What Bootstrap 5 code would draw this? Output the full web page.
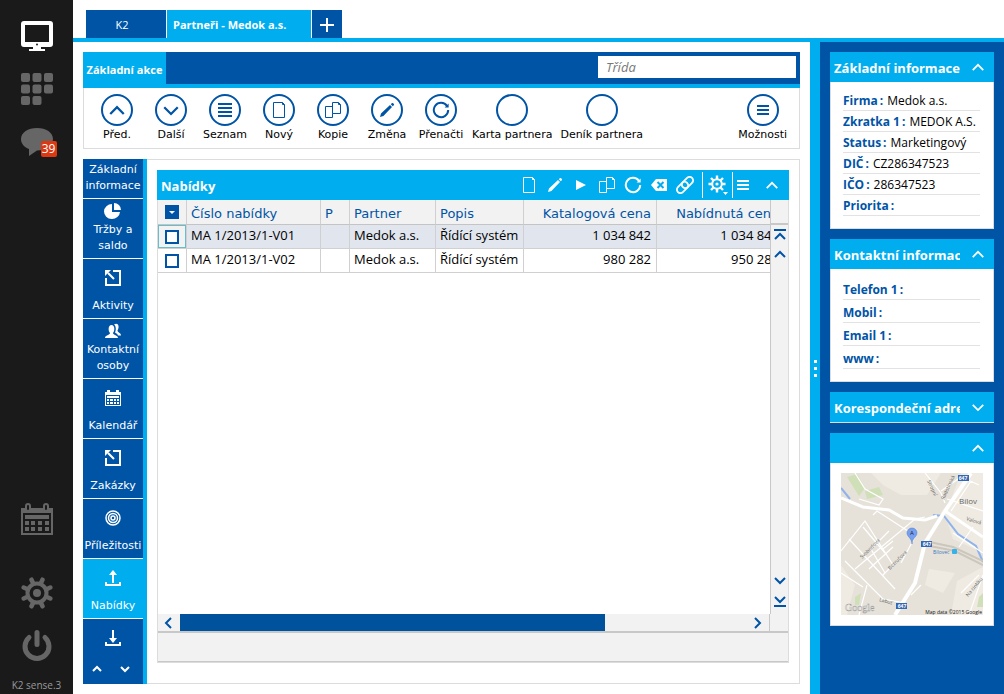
<!DOCTYPE html>
<html lang="cs">
<head>
<meta charset="utf-8">
<meta name="viewport" content="width=device-width, initial-scale=1">
<title>K2 – Partneři</title>
<link href="https://cdn.jsdelivr.net/npm/bootstrap@5.3.0/dist/css/bootstrap.min.css" rel="stylesheet">
<style>
:root { --navy:#0054a6; --sky:#00adef; --line:#dcdcdc; --pale:#f2f2f2; --wide:"DejaVu Sans",Verdana,sans-serif; --text:"Open Sans","Segoe UI",sans-serif; }
body { font:13px/18px var(--text); color:#000; background:#fff; }
button { border:0; padding:0; background:none; color:inherit; font:inherit; }
svg { display:block; flex:none; }
.ico { fill:none; stroke:currentColor; stroke-width:2; }
.bg-navy { background:var(--navy); }
.bg-sky { background:var(--sky); }
.min-0 { min-width:0; min-height:0; }

.app-side { width:73px; background:#1a1a1a; color:#666; padding:20px 0 2px; }
.app-side button { width:32px; height:32px; margin-bottom:21px; }
.app-side .apart { margin-bottom:42px; }
.app-side .on { color:#fff; }
.app-side .count { position:absolute; left:20px; top:15px; width:16px; height:16px; border-radius:2px; background:#dc3912; color:#fff; font-size:12px; line-height:16px; }
.app-ver { font-size:10px; line-height:14px; color:#999; }

.doc-tabs { padding:10px 13px 0; border-bottom:4px solid var(--sky); gap:1px; }
.doc-tabs button { height:28px; padding-top:2px; color:#fff; background:var(--navy); font-size:11px; }
.doc-tabs .t-home { width:80px; padding-right:8px; }
.doc-tabs .t-open { width:144px; padding-left:6px; background:var(--sky); font-weight:700; text-align:left; }
.doc-tabs .t-add { width:30px; }

.workspace { padding:10px; gap:10px; }
.ribbon-head { height:36px; border-bottom:4px solid var(--sky); padding-right:4px; }
.ribbon-head button { height:36px; width:83px; background:var(--sky); color:#fff; font-size:11px; font-weight:700; }
.ribbon-head input { width:198px; height:22px; border:0; border-radius:0; padding:0 8px; font:italic 13px/20px var(--text); }
.ribbon-head input::placeholder { color:#777; }
.ribbon-body { border:1px solid var(--line); border-top:0; padding:6px 8px 7px 6px; height:61px; }
.act { min-width:54px; padding:0 4px; font:11px/14px var(--wide); white-space:nowrap; }
.act .ring { width:32px; height:32px; border:2px solid var(--navy); border-radius:50%; color:var(--navy); margin:0 auto 2px; }

.sect-nav { width:64px; border-right:4px solid var(--sky); background:var(--navy); color:#fff; font:11px/16px var(--wide); }
.sect-nav button { height:60px; flex:none; border-bottom:1px solid #fff; text-align:center; white-space:nowrap; }
.sect-nav .first { height:40px; padding-bottom:2px; }
.sect-nav .tall { padding-top:11px; gap:12px; }
.sect-nav .two { padding-top:3px; gap:2px; }
.sect-nav .current { background:var(--sky); }
.sect-nav .rest { padding:11px 0 10px; }

.sheet { border:1px solid var(--line); border-left:0; padding:10px 10px 20px; }
.bar { height:30px; color:#fff; padding:0 3px 0 4px; font-size:13px; font-weight:700; }
.bar .caption { padding-top:2px; }
.bar .tools button { width:26px; height:26px; display:flex; align-items:center; justify-content:center; }
.bar .tools .sep { border-left:1px solid #fff; }
.bar .tools .menu { width:21px; }
.bar .tools .fold { width:33px; }
.gridbox { border:1px solid var(--line); border-top:0; }
.rows { overflow:hidden; }
.rows table { table-layout:fixed; width:627px; border-collapse:separate; border-spacing:0; }
.rows th, .rows td { height:24px; padding:0 5px 3px 4px; border-right:1px solid #d0d0d0; border-bottom:1px solid #d0d0d0; white-space:nowrap; overflow:hidden; line-height:20px; }
.rows th { height:25px; padding-top:4px; padding-bottom:0; background:var(--pale); color:var(--navy); font:13px/20px var(--wide); border-bottom:1px solid #c4c4c4; }
.rows td.num, .rows th.num { text-align:right; }
.rows .pick { padding:0; text-align:center; }
.rows .sel td { background:#e1e6ee; }
.rows .sel .pick { background:var(--pale); box-shadow:inset 0 0 0 1px #6bbccb; }
.rows input { appearance:none; width:14px; height:14px; border:2px solid var(--navy); background:#fff; display:block; margin:1px auto 0; }
.rows .drop { width:14px; height:14px; background:var(--navy); color:#fff; display:block; margin:0 auto; }
.vscroll { width:18px; background:var(--pale); color:var(--navy); border-left:1px solid #c8c8c8; }
.vscroll .cap { height:25px; border-bottom:2px solid #c8c8c8; }
.vscroll button { height:20px; width:100%; display:flex; align-items:center; justify-content:center; }
.vscroll .last { margin-bottom:3px; }
.hscroll { height:19px; background:var(--pale); border-bottom:2px solid #c8c8c8; color:var(--navy); }
.hscroll button { width:22px; display:flex; align-items:center; justify-content:center; }
.hscroll .thumb { width:75%; background:#00529c; }
.hscroll .corner { width:19px; border-left:1px solid #c8c8c8; }
.sumline { height:29px; background:var(--pale); border-bottom:1px solid #c8c8c8; }

.splitter { width:10px; color:#fff; }
.splitter i { width:3px; height:3px; background:#fff; }
.info { width:184px; padding:10px; gap:10px; }
.info .bar { padding-right:9px; }
.info .bar h2 { font-size:13px; line-height:20px; font-weight:700; width:126px; white-space:nowrap; overflow:hidden; margin:0; padding-top:2px; }
.pane { background:#fff; border:1px solid var(--line); border-top:0; padding:8px 13px 12px 12px; }
.pane dl { margin:0; font-size:12px; line-height:22px; }
.pane dl div { height:21px; border-bottom:1px solid #e2e2e2; display:flex; gap:4px; white-space:nowrap; }
.pane .loose div { height:23px; padding-top:2px; }
.pane dt { color:var(--navy); font-weight:700; }
.pane dd { margin:0; }
.pane.shut { padding:0; border-width:0 0 1px; }
.pane.chart { padding:10px; }
.chart svg { width:100%; height:auto; }
</style>
</head>
<body>
<svg width="0" height="0" class="position-absolute" aria-hidden="true">
  <symbol id="up" viewBox="0 0 16 16"><path d="M2 11.500 8 5.500 14 11.500"/></symbol>
  <symbol id="down" viewBox="0 0 16 16"><path d="M2 5.500 8 11.500 14 5.500"/></symbol>
  <symbol id="page" viewBox="0 0 16 16"><path stroke-width="1" d="M2.500.500h9l2 2v13h-11z M11.500.500v2h2"/></symbol>
  <symbol id="copy" viewBox="0 0 18 18"><path stroke-width="1" d="M8.500 12.500v4h-7v-11h7 M8.500 1.500h6l2 2v9h-8z M14.500 1.500v2h2"/></symbol>
  <symbol id="pencil" viewBox="0 0 16 16"><path fill="currentColor" stroke="none" d="M1 15l1-3.400L11 3l2 2-8.600 9zM11.800 2.200 13 1c.8-.6 2.600 1.200 2 2l-1.200 1.200z"/></symbol>
  <symbol id="reload" viewBox="0 0 18 18"><path d="M15 5A7.200 7.200 0 1 0 16.200 9"/><path fill="currentColor" stroke="none" d="M16.600 2.600v4h-4z"/></symbol>
  <symbol id="export" viewBox="0 0 16 16"><path d="M8 1h7v14H1V8M3 3l6 6"/><path fill="currentColor" stroke="none" d="M0 0h6L0 6z"/></symbol>
</svg>
<div class="d-flex vh-100 overflow-hidden">
  <nav class="app-side d-flex flex-column align-items-center flex-shrink-0" aria-label="Aplikace">
    <button class="on" aria-label="Plocha"><svg width="32" height="30" viewBox="0 0 32 30"><path fill="currentColor" fill-rule="evenodd" d="M3 0h26a3 3 0 0 1 3 3v20a3 3 0 0 1-3 3H20v2h4v2H8v-2h4v-2H3a3 3 0 0 1-3-3V3a3 3 0 0 1 3-3zm1 4v17h24V4z"/><circle cx="16" cy="23.500" r="1" fill="#1a1a1a"/></svg></button>
    <button aria-label="Moduly"><svg width="32" height="32" fill="currentColor"><rect width="9" height="9" rx="2"/><rect x="11.500" width="9" height="9" rx="2"/><rect x="23" width="9" height="9" rx="2"/><rect y="11.500" width="9" height="9" rx="2"/><rect x="11.500" y="11.500" width="9" height="9" rx="2"/><rect x="23" y="11.500" width="9" height="9" rx="2"/><rect y="23" width="9" height="9" rx="2"/><rect x="11.500" y="23" width="9" height="9" rx="2"/></svg></button>
    <button class="position-relative" aria-label="Zprávy"><svg width="32" height="28" fill="currentColor"><path d="M16 0c9 0 16 4.500 16 11s-7 11.500-16 11.500L8 28V21C3 19 0 15.500 0 11 0 4.500 7 0 16 0z"/></svg><span class="count">39</span></button>
    <button class="mt-auto apart" aria-label="Kalendář"><svg width="32" height="32" viewBox="0 0 32 32"><path fill="none" stroke="currentColor" stroke-width="2" d="M1 6h30v25H1z"/><path fill="currentColor" d="M0 5h32v5H0zM4 12h24v4H4zM4 18h4v4H4zm6 0h4v4h-4zm7 0h4v4h-4zm7 0h4v4h-4zM4 24h4v4H4zm6 0h4v4h-4zm7 0h4v4h-4zm7 0h4v4h-4z"/><g stroke="#666" stroke-width="2" fill="#1a1a1a"><rect x="5" y="1" width="4" height="7" rx="2"/><rect x="23" y="1" width="4" height="7" rx="2"/></g></svg></button>
    <button aria-label="Nastavení"><svg width="32" height="32" viewBox="-16 -16 32 32" fill="none" stroke="currentColor"><circle r="9.500" stroke-width="4"/><circle r="4" fill="currentColor" stroke="none"/><path stroke-width="4.500" stroke-linecap="round" d="M4 -10 5.500-13.300M10 -4 13.300-5.500M10 4 13.300 5.500M4 10 5.500 13.300M-4 10-5.500 13.300M-10 4-13.300 5.500M-10-4-13.300-5.500M-4-10-5.500-13.300"/></svg></button>
    <button class="mb-3" aria-label="Vypnout"><svg width="32" height="32" viewBox="0 0 32 32" fill="none" stroke="currentColor" stroke-width="5" stroke-linecap="round"><path d="M16 2.500v12M8 7.500a12 12 0 1 0 16 0"/></svg></button>
    <span class="app-ver">K2 sense.3</span>
  </nav>

  <div class="d-flex flex-column flex-grow-1 min-0">
    <div class="doc-tabs d-flex flex-shrink-0">
      <button class="t-home">K2</button>
      <button class="t-open">Partneři - Medok a.s.</button>
      <button class="t-add d-flex align-items-center justify-content-center" aria-label="Nová záložka"><svg class="ico" width="14" height="14"><path d="M7 0v14M0 7h14"/></svg></button>
    </div>
    <div class="d-flex flex-grow-1 min-0">
      <main class="workspace d-flex flex-column flex-grow-1 min-0">
        <section class="flex-shrink-0">
          <div class="ribbon-head bg-navy d-flex justify-content-between">
            <button>Základní akce</button>
            <input type="text" class="mt-1 form-control-plaintext bg-white flex-shrink-0" placeholder="Třída" aria-label="Třída">
          </div>
          <div class="ribbon-body d-flex">
            <button class="act"><span class="ring d-flex align-items-center justify-content-center"><svg class="ico" width="18" height="18"><use href="#up"/></svg></span>Před.</button>
            <button class="act"><span class="ring d-flex align-items-center justify-content-center"><svg class="ico" width="18" height="18"><use href="#down"/></svg></span>Další</button>
            <button class="act"><span class="ring d-flex align-items-center justify-content-center"><svg class="ico" width="14" height="14"><path d="M0 1h14M0 5h14M0 9h14M0 13h14"/></svg></span>Seznam</button>
            <button class="act"><span class="ring d-flex align-items-center justify-content-center"><svg class="ico" width="16" height="16"><use href="#page"/></svg></span>Nový</button>
            <button class="act"><span class="ring d-flex align-items-center justify-content-center"><svg class="ico" width="18" height="18"><use href="#copy"/></svg></span>Kopie</button>
            <button class="act"><span class="ring d-flex align-items-center justify-content-center"><svg class="ico" width="16" height="16"><use href="#pencil"/></svg></span>Změna</button>
            <button class="act"><span class="ring d-flex align-items-center justify-content-center"><svg class="ico" width="18" height="18"><use href="#reload"/></svg></span>Přenačti</button>
            <button class="act"><span class="ring d-block"></span>Karta partnera</button>
            <button class="act"><span class="ring d-block"></span>Deník partnera</button>
            <button class="act ms-auto"><span class="ring d-flex align-items-center justify-content-center"><svg class="ico" width="12" height="10"><path d="M0 1h12M0 5h12M0 9h12"/></svg></span>Možnosti</button>
          </div>
        </section>

        <div class="d-flex flex-grow-1 min-0">
          <nav class="sect-nav d-flex flex-column flex-shrink-0 overflow-hidden" aria-label="Záložky">
            <button class="first">Základní<br>informace</button>
            <button class="two d-flex flex-column align-items-center"><svg width="18" height="18" viewBox="0 0 18 18" fill="currentColor"><path d="M8 2v8h8a8 7.500 0 1 1-8-8z"/><path d="M10 1a7 7 0 0 1 7 7h-7z"/></svg><span>Tržby a<br>saldo</span></button>
            <button class="tall d-flex flex-column align-items-center"><svg class="ico" width="16" height="16"><use href="#export"/></svg>Aktivity</button>
            <button class="two d-flex flex-column align-items-center"><svg width="18" height="18" viewBox="0 0 18 18" fill="currentColor"><path d="M1 16c0-3 5-3 5-5-2-2-2-8 1.500-8S11 9 9 11c0 2 5 2 5 5z"/><path d="M10 2.500c4-2.500 6 2 3.500 6 0 2 3.500 2 3.500 5h-3c-.5-2-2.500-2.200-3-3 1-2 1.500-6-1-8z"/></svg><span>Kontaktní<br>osoby</span></button>
            <button class="tall d-flex flex-column align-items-center"><svg width="16" height="16" fill="currentColor"><path fill-rule="evenodd" d="M0 2h2V0h3v2h6V0h3v2h2v14H0zm1 3v10h14V5zm1 1h12v2H2zm0 3h2v2H2zm3 0h3v2H5zm4 0h2v2H9zm3 0h2v2h-2zM2 12h2v2H2zm3 0h3v2H5zm4 0h2v2H9zm3 0h2v2h-2z"/></svg>Kalendář</button>
            <button class="tall d-flex flex-column align-items-center"><svg class="ico" width="16" height="16"><use href="#export"/></svg>Zakázky</button>
            <button class="tall d-flex flex-column align-items-center"><svg width="16" height="16" fill="none" stroke="currentColor" stroke-width="1.500"><circle cx="8" cy="8" r="7"/><circle cx="8" cy="8" r="4.500"/><circle cx="8" cy="8" r="2"/></svg>Příležitosti</button>
            <button class="tall current d-flex flex-column align-items-center" aria-current="true"><svg class="ico" width="16" height="16"><path d="M8 13V3M1 12v3h14v-3"/><path fill="currentColor" stroke="none" d="M4 5l4-5 4 5z"/></svg>Nabídky</button>
            <div class="rest flex-grow-1 d-flex flex-column align-items-center justify-content-between"><svg class="ico" width="16" height="16"><path d="M8 0v10M1 12v3h14v-3"/><path fill="currentColor" stroke="none" d="M4 8l4 5 4-5z"/></svg>
              <div class="d-flex gap-3 pe-1"><button class="h-auto border-0" aria-label="Nahoru"><svg class="ico" width="12" height="10" viewBox="0 0 12 10"><path d="M2 7l4-4 4 4"/></svg></button><button class="h-auto border-0" aria-label="Dolů"><svg class="ico" width="12" height="10" viewBox="0 0 12 10"><path d="M2 3l4 4 4-4"/></svg></button></div></div>
          </nav>

          <section class="sheet flex-grow-1 d-flex flex-column min-0">
            <div class="bar bg-sky d-flex align-items-center justify-content-between flex-shrink-0">
              <span class="caption">Nabídky</span>
              <div class="tools d-flex">
                <button aria-label="Nový"><svg class="ico" width="16" height="16"><use href="#page"/></svg></button>
                <button aria-label="Změna"><svg class="ico" width="16" height="16"><use href="#pencil"/></svg></button>
                <button aria-label="Spustit"><svg width="10" height="10" fill="currentColor"><path d="M0 0l10 5-10 5z"/></svg></button>
                <button aria-label="Kopie"><svg class="ico" width="18" height="18"><use href="#copy"/></svg></button>
                <button aria-label="Přenačti"><svg class="ico" width="18" height="18"><use href="#reload"/></svg></button>
                <button aria-label="Smazat"><svg width="16" height="12" fill="none" stroke="#00adef" stroke-width="2"><path fill="#fff" stroke="none" d="M0 6l5-6h11v12H5z"/><path d="M6.500 3l6 6M12.500 3l-6 6"/></svg></button>
                <button aria-label="Přílohy"><svg width="18" height="18" viewBox="0 0 18 18" fill="none" stroke="currentColor" stroke-width="1.800"><g transform="rotate(-45 9 9)"><rect x="-1" y="5.500" width="13" height="7" rx="3.500"/><rect x="6" y="5.500" width="13" height="7" rx="3.500"/></g></svg></button>
                <button class="sep ms-1 ps-1" aria-label="Nastavení"><svg width="20" height="20" viewBox="-9 -9 20 20" fill="none" stroke="currentColor"><circle r="4.800" stroke-width="2"/><circle r="1.600" fill="currentColor" stroke="none"/><path stroke-width="2.400" d="M0-5V-8.500M0 5V8.500M-5 0H-8.500M5 0H8.500M3.500-3.500 6-6M3.500 3.500 6 6M-3.500 3.500-6 6M-3.500-3.500-6-6"/><path fill="currentColor" stroke="none" d="M6 8h5l-2.500 3z"/></svg></button>
                <button class="sep menu ms-1" aria-label="Menu"><svg class="ico" width="12" height="10"><path d="M0 1h12M0 5h12M0 9h12"/></svg></button>
                <button class="fold ps-1" aria-label="Sbalit"><svg class="ico" width="14" height="14"><use href="#up"/></svg></button>
              </div>
            </div>
            <div class="gridbox flex-grow-1 d-flex flex-column min-0">
              <div class="d-flex flex-grow-1 min-0">
                <div class="rows flex-grow-1 min-0">
                  <table>
                    <colgroup><col style="width:29px"><col style="width:134px"><col style="width:29px"><col style="width:86px"><col style="width:88px"><col style="width:133px"><col style="width:128px"></colgroup>
                    <thead><tr><th class="pick"><button class="drop" aria-label="Výběr"><svg width="14" height="14" fill="currentColor"><path d="M4 6h6L7 9z"/></svg></button></th><th>Číslo nabídky</th><th>P</th><th>Partner</th><th>Popis</th><th class="num">Katalogová cena</th><th class="num">Nabídnutá cena</th></tr></thead>
                    <tbody>
                      <tr class="sel"><td class="pick"><input type="checkbox" aria-label="MA 1/2013/1-V01"></td><td>MA 1/2013/1-V01</td><td></td><td>Medok a.s.</td><td>Řídící systém</td><td class="num">1 034 842</td><td class="num">1 034 842</td></tr>
                      <tr><td class="pick"><input type="checkbox" aria-label="MA 1/2013/1-V02"></td><td>MA 1/2013/1-V02</td><td></td><td>Medok a.s.</td><td>Řídící systém</td><td class="num">980 282</td><td class="num">950 282</td></tr>
                    </tbody>
                  </table>
                </div>
                <div class="vscroll d-flex flex-column flex-shrink-0">
                  <div class="cap"></div>
                  <button aria-label="Začátek"><svg class="ico" width="12" height="12"><path d="M0 1h12M1 10l5-5 5 5"/></svg></button>
                  <button aria-label="Výš"><svg class="ico" width="12" height="12"><path d="M1 8l5-5 5 5"/></svg></button>
                  <button class="mt-auto" aria-label="Níž"><svg class="ico" width="12" height="12"><path d="M1 3l5 5 5-5"/></svg></button>
                  <button class="last" aria-label="Konec"><svg class="ico" width="12" height="12"><path d="M0 11h12M1 2l5 5 5-5"/></svg></button>
                </div>
              </div>
              <div class="hscroll d-flex flex-shrink-0">
                <button aria-label="Vlevo"><svg class="ico" width="12" height="12"><path d="M8 1L3 6l5 5"/></svg></button>
                <div class="flex-grow-1 d-flex"><div class="thumb"></div></div>
                <button aria-label="Vpravo"><svg class="ico" width="12" height="12"><path d="M3 1l5 5-5 5"/></svg></button>
                <div class="corner"></div>
              </div>
              <div class="sumline flex-shrink-0"></div>
            </div>
          </section>
        </div>
      </main>

      <div class="splitter bg-sky d-flex flex-column align-items-center justify-content-center gap-1 flex-shrink-0"><i></i><i></i><i></i></div>

      <aside class="info bg-navy d-flex flex-column flex-shrink-0">
        <section>
          <div class="bar bg-sky d-flex align-items-center justify-content-between"><h2>Základní informace</h2><button aria-label="Sbalit"><svg class="ico" width="14" height="14"><use href="#up"/></svg></button></div>
          <div class="pane"><dl>
            <div><dt>Firma&thinsp;:</dt><dd>Medok a.s.</dd></div>
            <div><dt>Zkratka 1&thinsp;:</dt><dd>MEDOK A.S.</dd></div>
            <div><dt>Status&thinsp;:</dt><dd>Marketingový</dd></div>
            <div><dt>DIČ&thinsp;:</dt><dd>CZ286347523</dd></div>
            <div><dt>IČO&thinsp;:</dt><dd>286347523</dd></div>
            <div><dt>Priorita&thinsp;:</dt><dd></dd></div>
          </dl></div>
        </section>
        <section>
          <div class="bar bg-sky d-flex align-items-center justify-content-between"><h2>Kontaktní informace</h2><button aria-label="Sbalit"><svg class="ico" width="14" height="14"><use href="#up"/></svg></button></div>
          <div class="pane"><dl class="loose">
            <div><dt>Telefon 1&thinsp;:</dt><dd></dd></div>
            <div><dt>Mobil&thinsp;:</dt><dd></dd></div>
            <div><dt>Email 1&thinsp;:</dt><dd></dd></div>
            <div><dt>www&thinsp;:</dt><dd></dd></div>
          </dl></div>
        </section>
        <section>
          <div class="bar bg-sky d-flex align-items-center justify-content-between"><h2>Korespondeční adresa</h2><button aria-label="Rozbalit"><svg class="ico" width="14" height="14"><use href="#down"/></svg></button></div>
          <div class="pane shut"></div>
        </section>
        <section>
          <div class="bar bg-sky d-flex align-items-center justify-content-end"><button aria-label="Sbalit"><svg class="ico" width="14" height="14"><use href="#up"/></svg></button></div>
          <div class="pane chart">
            <svg viewBox="0 0 142 142" font-family="Open Sans, sans-serif" role="img" aria-label="Mapa">
              <rect width="142" height="142" fill="#e6e2d9"/>
              <path fill="#efebe2" d="M30 0h70l-14 22H60L42 12zM142 20v60l-30-14-8-24 16-42h22zM88 96l26 4-12 20-18-8zM0 92l14 20-8 30H0zM110 142l6-34 26-14v48z"/>
              <path fill="#cfe0b8" d="M6 4l10-3 8 14-6 8zM24 18l14-4 4 8-16 4zM14 124l6-4-2 12h-4zM138 124l4-4v14l-6 0z"/>
              <path fill="none" stroke="#8fb3ec" stroke-width="2" d="M0 15l9 11M92 42l11 1 14 18 18 12 7 16"/>
              <g fill="none" stroke="#fff" stroke-width="1.200"><path d="M14 0l10 16 18 10-4 6-20-6M0 78l24-30 28 44-10 10M8 66l46 50M14 96l60-50 10-2M32 42l4-4 34 22M42 76l10-8M4 88l38 38 22 4M22 54l22 26M28 96l24-22M48 58l-18 18 14 24M60 90l16-30M100 18l20-14 18 8M106 26l36 12M110 38l20-30M112 60l30 20M132 54l-14 20M80 112l-10 10M0 100l22 14M18 142l8-30M128 142l14-40M120 120l18-18M84 0l16 20 4 10"/></g>
              <path fill="none" stroke="#cbc7bd" stroke-width="2" d="M84 68l28 6 30 14M84 72l30 6 28 14"/>
              <path fill="none" stroke="#fff" stroke-width="3" d="M0 25l22 9 26 3 14 8 22 2 12-4M104 38l38 26"/>
              <path fill="none" stroke="#fff" stroke-width="4" d="M130 0l-26 38-20 32-10 40-20 32"/>
              <g fill="#3467b5"><rect x="117" y="2" width="11" height="6"/><rect x="80" y="68" width="11" height="6"/><rect x="55" y="130" width="11" height="6"/></g>
              <g fill="#fff" font-size="5" font-weight="700" text-anchor="middle"><text x="122" y="7">647</text><text x="86" y="73">647</text><text x="61" y="135">647</text></g>
              <rect x="111" y="76" width="5" height="5" rx="1" fill="#38b0e8"/>
              <g fill="#666" font-size="5"><text x="118" y="31" font-size="8">Bílov</text><text x="92" y="81" fill="#3b78c0">Bílovec</text><text transform="translate(125 47) rotate(18)">Valová</text><text transform="translate(21 86) rotate(-45)">Svobodova</text><text transform="translate(49 97) rotate(-45)">Bezručova</text><text transform="translate(38 128) rotate(16)">Labuť</text><text transform="translate(127 124) rotate(-50)">Na cintíku</text><text transform="translate(103 27) rotate(-65)">Radotínská</text><text transform="translate(86 8) rotate(65)">Stropní</text></g>
              <path fill="#78a0f0" stroke="#4a72c8" stroke-width="0.500" d="M71 71c0-6-5-7-5-11a5 5 0 0 1 10 0c0 4-5 5-5 11z"/>
              <text x="71" y="62" font-size="6" text-anchor="middle" fill="#223">A</text>
              <text x="4" y="138" font-family="Liberation Serif, serif" font-size="10" fill="#fff" stroke="#999" stroke-width="0.400">Google</text>
              <text x="141" y="141" font-size="5" text-anchor="end" fill="#111">Map data ©2015 Google</text>
            </svg>
          </div>
        </section>
      </aside>
    </div>
  </div>
</div>
<script src="https://cdn.jsdelivr.net/npm/bootstrap@5.3.0/dist/js/bootstrap.bundle.min.js"></script>
</body>
</html>
